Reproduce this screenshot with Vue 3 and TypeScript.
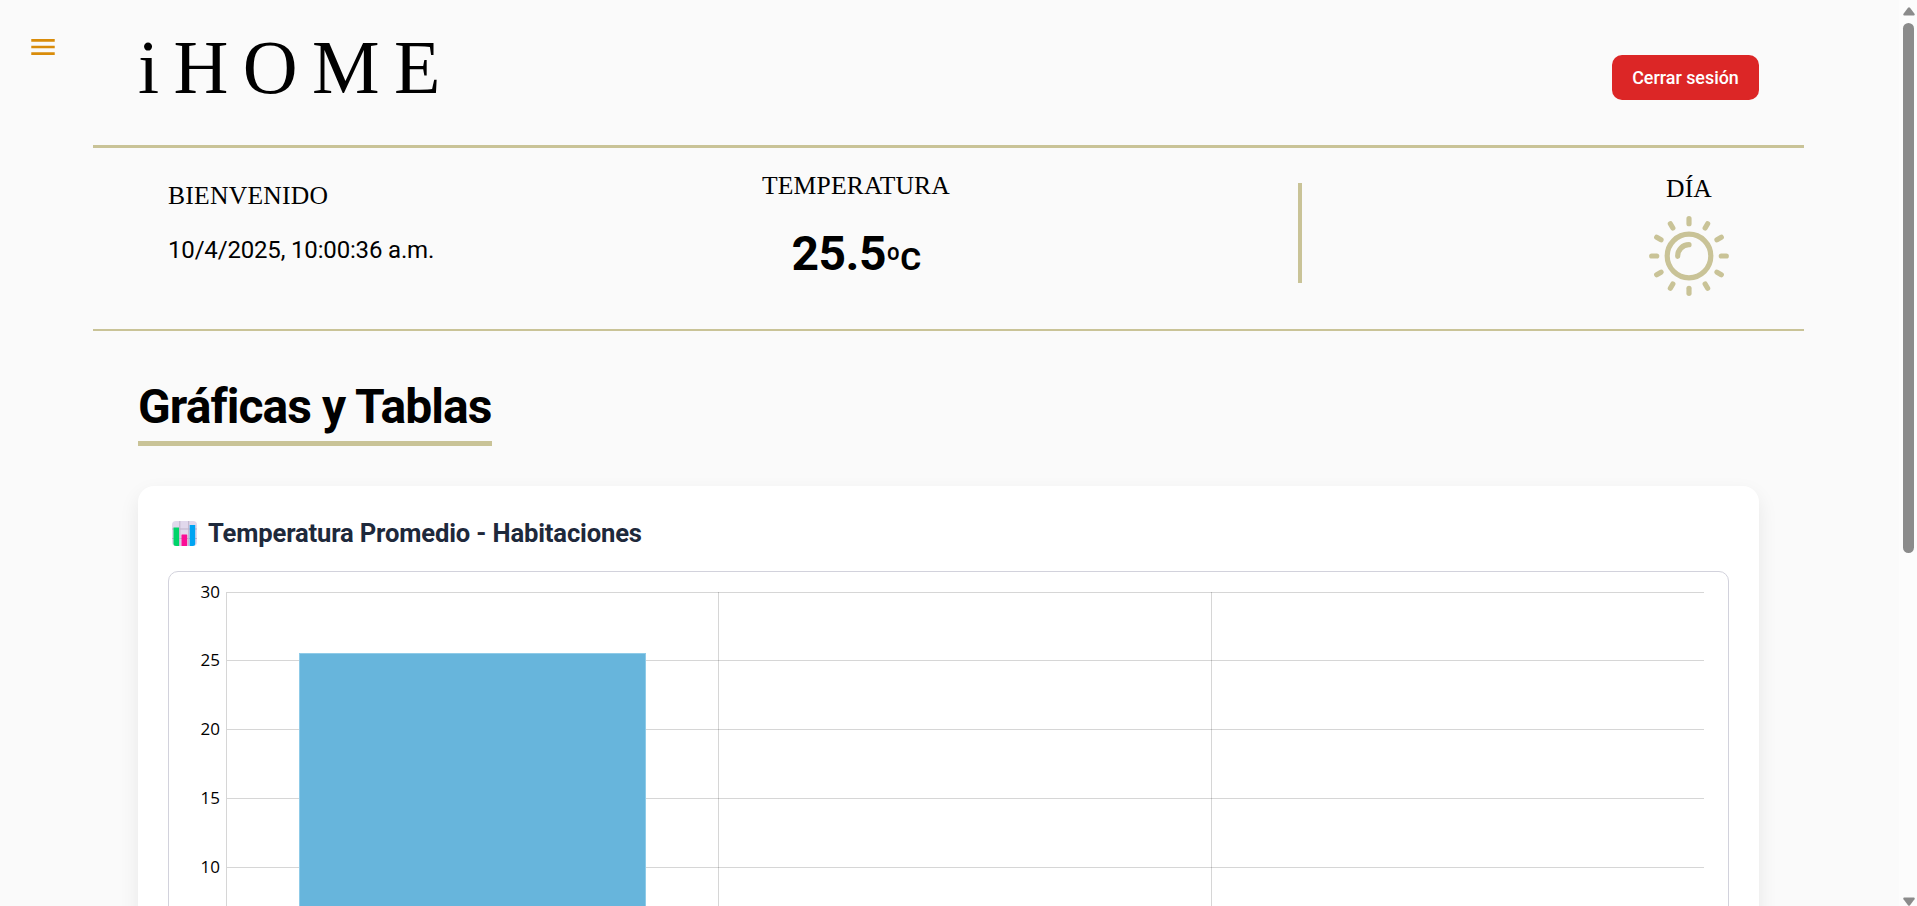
<script setup lang="ts">
interface Tick {
  value: number
  y: number
}

const rayAngles: number[] = Array.from({ length: 12 }, (_, i) => i * 30)

const gridTop = 20.5
const gridStep = 68.75
const ticks: Tick[] = [30, 25, 20, 15, 10].map((value, i) => ({
  value,
  y: Math.floor(gridTop + gridStep * i - 0.5) + 0.5,
}))
const columns: number[] = [57.5, 549.5, 1042.5]
const average = 25.55
const barTop = Math.round(gridTop + ((30 - average) / 5) * gridStep) - 0.5
const barHeight = (average / 5) * gridStep
</script>

<template>
  <div class="window">
    <div class="page">
      <button class="menu" aria-label="Menú">
        <svg viewBox="0 0 24 24" width="32" height="32">
          <path d="M3.200 18h17.600v-2H3.200v2zm0-5h17.600v-2H3.200v2zm0-7v2h17.600V6H3.200z" fill="#d98c0a" />
        </svg>
      </button>

      <main class="content">
        <header class="top">
          <h1 class="brand">iHOME</h1>
          <button class="logout">Cerrar sesión</button>
        </header>

        <section class="status">
          <div class="welcome">
            <p class="label">BIENVENIDO</p>
            <p class="date">10/4/2025, 10:00:36 a.m.</p>
          </div>
          <div class="temperature">
            <p class="label">TEMPERATURA</p>
            <p class="degrees">25.5<span class="unit">ºC</span></p>
          </div>
          <div class="divider"></div>
          <div class="day">
            <p class="label">DÍA</p>
            <svg class="sun" viewBox="-40 -40 80 80" width="80" height="80">
              <g fill="none" stroke="#c9c397" stroke-width="5.2" stroke-linecap="round">
                <circle r="21.8" />
                <path d="M-11.3 0.3A11.3 11.3 0 0 1 0 -11.3" />
                <path v-for="a in rayAngles" :key="a" d="M0 -37.3V-32.3" :transform="`rotate(${a})`" />
              </g>
            </svg>
          </div>
        </section>

        <section class="reports">
          <h2 class="heading">Gráficas y Tablas</h2>
          <article class="card">
            <h3 class="card-title">
              <svg class="chart-icon" viewBox="0 0 25 25" width="25" height="25">
                <rect width="25" height="25" rx="4" fill="#e1d8ec" />
                <path d="M0 8H25M0 17.5H25M7.8 0V25M16.7 0V25" stroke="#bdb3c9" stroke-width="1" />
                <path d="M1.5 6.5h5.5v18.5h-3a2.5 2.5 0 0 1-2.5-2.5z" fill="#00d46a" />
                <rect x="9.5" y="13.5" width="5.7" height="11.5" rx=".6" fill="#fb0c96" />
                <path d="M17.7 4h5.5v18.500a2.500 2.500 0 0 1-2.500 2.500h-3z" fill="#00a4f2" />
              </svg>
              <span>Temperatura Promedio - Habitaciones</span>
            </h3>
            <div class="chart">
              <svg width="1559" height="480" viewBox="0 0 1559 480">
                <g stroke="#000" stroke-opacity=".16">
                  <path v-for="t in ticks" :key="t.value" :d="`M58 ${t.y}H1535`" />
                  <path v-for="x in columns" :key="x" :d="`M${x} 20V433`" />
                </g>
                <rect
                  x="130.5"
                  :y="barTop"
                  width="346"
                  :height="barHeight"
                  fill="#67b5dc"
                  stroke="#8fcbe8"
                />
                <text v-for="t in ticks" :key="t.value" x="51" :y="t.y + 5.5" text-anchor="end">
                  {{ t.value }}
                </text>
              </svg>
            </div>
          </article>
        </section>
      </main>
    </div>

    <div class="scrollbar">
      <svg width="12" height="9" viewBox="0 0 12 9"><path d="M5 .8q1-1 2 0l4.500 6q.7 1.700-.8 1.700H1.300Q-.2 8.500.5 6.800z" fill="#8b8b8b" /></svg>
      <div class="thumb"></div>
      <svg width="12" height="9" viewBox="0 0 12 9"><path d="M5 8.200q1 1 2 0l4.500-6Q12.200.5 10.700.5H1.300Q-.2.5.5 2.200z" fill="#8b8b8b" /></svg>
    </div>
  </div>
</template>

<style>
body {
  margin: 0;
  overflow: hidden;
}
</style>

<style scoped>
.window {
  display: flex;
  height: 100vh;
  overflow: hidden;
  background: #fafafa;
  color: #000;
  font-family: Roboto, "Liberation Sans", sans-serif;
}
.window * {
  box-sizing: border-box;
}
h1,
h2,
h3,
p {
  margin: 0;
}
.page {
  display: flex;
  flex: 1;
  align-items: flex-start;
  min-width: 0;
}
.menu {
  flex: none;
  width: 93px;
  padding: 31px 0 0 27px;
  border: 0;
  background: none;
  text-align: left;
}
.menu svg {
  display: block;
}
.content {
  width: 1711px;
  flex: none;
}
.top {
  display: flex;
  justify-content: space-between;
  height: 148px;
  padding: 0 45px;
  border-bottom: 3px solid #c9c397;
}
.brand {
  margin-top: 23px;
  font: 400 76px/88px "Liberation Serif", serif;
  letter-spacing: 14.4px;
}
.logout {
  width: 147px;
  height: 45px;
  margin-top: 55px;
  padding: 1px 0 0;
  border: 0;
  border-radius: 10px;
  background: #dc2626;
  color: #fff;
  font: 500 17.9px/44px Roboto, sans-serif;
  white-space: nowrap;
}
.status {
  display: grid;
  grid-template-columns: 594px 536px 351px 80px;
  height: 183px;
  padding: 0 75px;
  border-bottom: 2px solid #c9c397;
}
.label {
  font: 400 25.6px/30px "Liberation Serif", serif;
  letter-spacing: 0.15px;
}
.welcome {
  padding-top: 33px;
  white-space: nowrap;
}
.welcome .label {
  letter-spacing: 0.25px;
}
.date {
  margin-top: 24px;
  font-size: 24px;
  line-height: 30px;
  letter-spacing: -0.17px;
}
.temperature {
  width: 188px;
  padding-top: 23px;
  text-align: center;
}
.degrees {
  margin-top: 25px;
  font-size: 48px;
  font-weight: 700;
  line-height: 56px;
  letter-spacing: -0.5px;
}
.unit {
  font-size: 32px;
}
.divider {
  width: 4px;
  height: 100px;
  margin-top: 35px;
  background: #c9c397;
}
.day {
  padding-top: 26px;
  text-align: center;
}
.sun {
  display: block;
  margin-top: 12px;
}
.reports {
  padding: 0 45px;
}
.heading {
  width: 354px;
  height: 69px;
  margin-top: 46px;
  border-bottom: 5px solid #c9c397;
  font-size: 48px;
  font-weight: 700;
  line-height: 60px;
  letter-spacing: -0.92px;
  white-space: nowrap;
}
.card {
  height: 640px;
  margin-top: 40px;
  padding: 30px;
  border-radius: 16px;
  background: #fff;
  box-shadow: 0 8px 20px rgba(0, 0, 0, 0.08);
}
.card-title {
  display: flex;
  align-items: center;
  height: 34px;
  padding-left: 4px;
  color: #1e293b;
  font-size: 25.6px;
  font-weight: 700;
  line-height: 34px;
  letter-spacing: -0.15px;
  white-space: nowrap;
}
.chart-icon {
  margin-right: 11px;
}
.chart {
  height: 500px;
  margin-top: 21px;
  border: 1px solid #d2d2dc;
  border-radius: 10px;
}
.chart svg {
  display: block;
}
.chart text {
  fill: #000;
  font: 400 17px "Open Sans", "Noto Sans", sans-serif;
}
.scrollbar {
  display: flex;
  flex: none;
  flex-direction: column;
  justify-content: space-between;
  align-items: center;
  width: 18px;
  height: 100vh;
  padding: 7px 0 0 1px;
  background: #fcfcfc;
}
.thumb {
  width: 11px;
  height: 530px;
  margin: 7px 0 auto;
  border-radius: 6px;
  background: #8b8b8b;
}
</style>
